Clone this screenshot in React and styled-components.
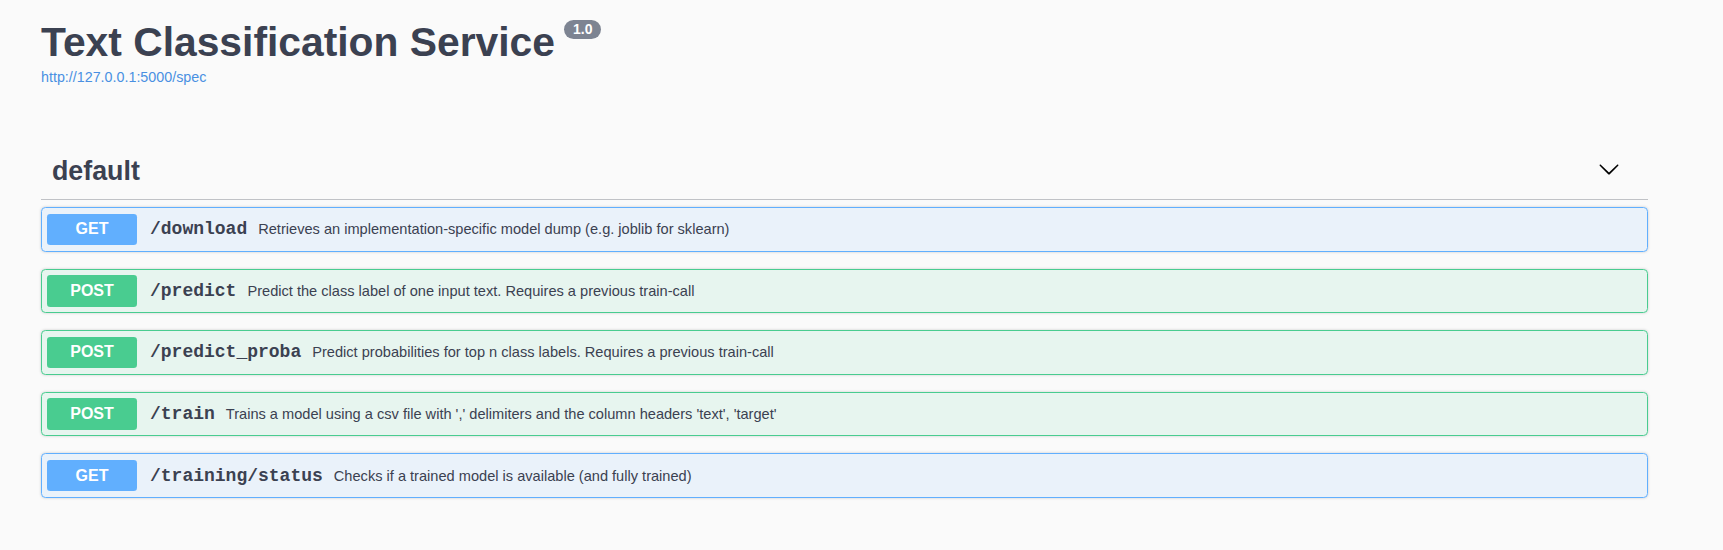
import React from 'react';
import styled, { createGlobalStyle } from 'styled-components';

const GlobalStyle = createGlobalStyle`
  html, body {
    margin: 0;
    padding: 0;
    background: #fafafa;
  }
  body {
    font-family: "Liberation Sans", Arial, sans-serif;
    color: #3b4151;
  }
`

const METHOD_COLORS = {
  GET: { main: '#61affe', bg: 'rgba(97, 175, 254, 0.1)' },
  POST: { main: '#49cc90', bg: 'rgba(73, 204, 144, 0.1)' },
}

const operations = [
  { method: 'GET', path: '/download', summary: 'Retrieves an implementation-specific model dump (e.g. joblib for sklearn)' },
  { method: 'POST', path: '/predict', summary: 'Predict the class label of one input text. Requires a previous train-call' },
  { method: 'POST', path: '/predict_proba', summary: 'Predict probabilities for top n class labels. Requires a previous train-call' },
  { method: 'POST', path: '/train', summary: "Trains a model using a csv file with ',' delimiters and the column headers 'text', 'target'" },
  { method: 'GET', path: '/training/status', summary: 'Checks if a trained model is available (and fully trained)' },
]

const ArrowDown = () => (
  <svg width='22' height='22' viewBox='0 0 20 20' aria-hidden='true'>
    <path
      fill='#000'
      d='M17.418 6.109c.272-.268.709-.268.979 0s.271.701 0 .969l-7.908 7.83c-.27.268-.707.268-.979 0l-7.908-7.83c-.27-.268-.27-.701 0-.969.271-.268.709-.268.979 0L10 13.25l7.418-7.141z'
    />
  </svg>
)

const App = () => {
  return (
    <Wrapper>
      <GlobalStyle />
      <Info>
        <TitleRow>
          <Title>Text Classification Service</Title>
          <Version>1.0</Version>
        </TitleRow>
        <SpecLink href='#'>http://127.0.0.1:5000/spec</SpecLink>
      </Info>

      <TagSection>
        <TagHeader>
          <TagName>default</TagName>
          <ExpandButton type='button' aria-label='collapse'>
            <ArrowDown />
          </ExpandButton>
        </TagHeader>

        {operations.map(({ method, path, summary }) => (
          <OpBlock key={path} $method={method}>
            <Method $method={method}>{method}</Method>
            <Path>{path}</Path>
            <Summary>{summary}</Summary>
          </OpBlock>
        ))}
      </TagSection>
    </Wrapper>
  )
}

const Wrapper = styled.div`
  width: 1607px;
  margin-left: 41px;
  padding-top: 19px;
`

const Info = styled.div`
  display: flex;
  flex-direction: column;
  align-items: flex-start;
`

const TitleRow = styled.div`
  display: flex;
  align-items: flex-start;
`

const Title = styled.h2`
  margin: 0;
  font-size: 40.8px;
  line-height: 46px;
  font-weight: 700;
  color: #3b4151;
`

const Version = styled.small`
  margin: 1px 0 0 9px;
  padding: 2px 9px;
  font-size: 14px;
  line-height: 15px;
  font-weight: 700;
  color: #fff;
  background: #7d8492;
  border-radius: 57px;
`

const SpecLink = styled.a`
  margin-top: 4px;
  font-size: 14.3px;
  color: #4990e2;
  text-decoration: none;
`

const TagSection = styled.section`
  margin-top: 60px;
`

const TagHeader = styled.h3`
  display: flex;
  align-items: center;
  margin: 0 0 7px;
  padding: 11px 28px 12px 11px;
  border-bottom: 1px solid rgba(59, 65, 81, 0.3);
`

const TagName = styled.span`
  flex: 1;
  font-size: 26.8px;
  line-height: 31px;
  font-weight: 700;
  color: #3b4151;
`

const ExpandButton = styled.button`
  display: flex;
  margin: 0 0 5px;
  padding: 0;
  border: none;
  background: none;
  cursor: pointer;
`

const OpBlock = styled.div`
  display: flex;
  align-items: center;
  margin-bottom: 17.1px;
  padding: 5.5px 5px;
  border: 1px solid ${({ $method }) => METHOD_COLORS[$method].main};
  border-radius: 4.4px;
  background: ${({ $method }) => METHOD_COLORS[$method].bg};
  box-shadow: 0 0 3px rgba(0, 0, 0, 0.19);
`

const Method = styled.span`
  display: flex;
  align-items: center;
  justify-content: center;
  width: 90px;
  height: 31.5px;
  border-radius: 3.3px;
  background: ${({ $method }) => METHOD_COLORS[$method].main};
  color: #fff;
  font-size: 16px;
  font-weight: 700;
`

const Path = styled.span`
  padding: 0 11px 0 13px;
  font-family: "Liberation Mono", "Courier New", monospace;
  font-size: 18px;
  font-weight: 700;
  color: #3b4151;
`

const Summary = styled.span`
  font-size: 14.6px;
  color: #3b4151;
`

export default App
